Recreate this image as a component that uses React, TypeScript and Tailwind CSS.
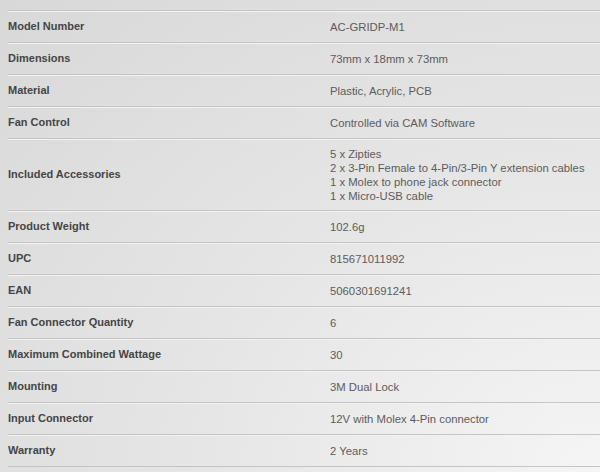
import React from 'react';

interface Spec {
  label: string;
  value: string[];
}

const specs: Spec[] = [
  { label: 'Model Number', value: ['AC-GRIDP-M1'] },
  { label: 'Dimensions', value: ['73mm x 18mm x 73mm'] },
  { label: 'Material', value: ['Plastic, Acrylic, PCB'] },
  { label: 'Fan Control', value: ['Controlled via CAM Software'] },
  {
    label: 'Included Accessories',
    value: [
      '5 x Zipties',
      '2 x 3-Pin Female to 4-Pin/3-Pin Y extension cables',
      '1 x Molex to phone jack connector',
      '1 x Micro-USB cable',
    ],
  },
  { label: 'Product Weight', value: ['102.6g'] },
  { label: 'UPC', value: ['815671011992'] },
  { label: 'EAN', value: ['5060301691241'] },
  { label: 'Fan Connector Quantity', value: ['6'] },
  { label: 'Maximum Combined Wattage', value: ['30'] },
  { label: 'Mounting', value: ['3M Dual Lock'] },
  { label: 'Input Connector', value: ['12V with Molex 4-Pin connector'] },
  { label: 'Warranty', value: ['2 Years'] },
];

export default function App() {
  return (
    <div className="h-[472px] w-[600px] overflow-hidden bg-[#dcdcdc] bg-radial-[at_100%_100%] from-[#f5f5f5] via-[#e5e5e5] to-[#d8d8d8] pt-[10px] pl-2 font-[Liberation_Sans,Arial,sans-serif] text-[11px]">
      <div className="border-b border-[#c4c4c4]">
        {specs.map((s) => {
          const multi = s.value.length > 1;
          return (
            <div
              key={s.label}
              className={`flex items-center border-t border-[#c4c4c4] shadow-[inset_0_1px_0_#f2f2f2] ${multi ? 'h-[72px]' : 'h-[32px]'}`}
            >
              <div className="w-[322px] shrink-0 font-bold text-[#454545]">{s.label}</div>
              <div className="flex flex-col text-[11.3px] leading-[14px] text-[#5c5c5c]">
                {s.value.map((v) => (
                  <span key={v}>{v}</span>
                ))}
              </div>
            </div>
          );
        })}
      </div>
    </div>
  );
}
